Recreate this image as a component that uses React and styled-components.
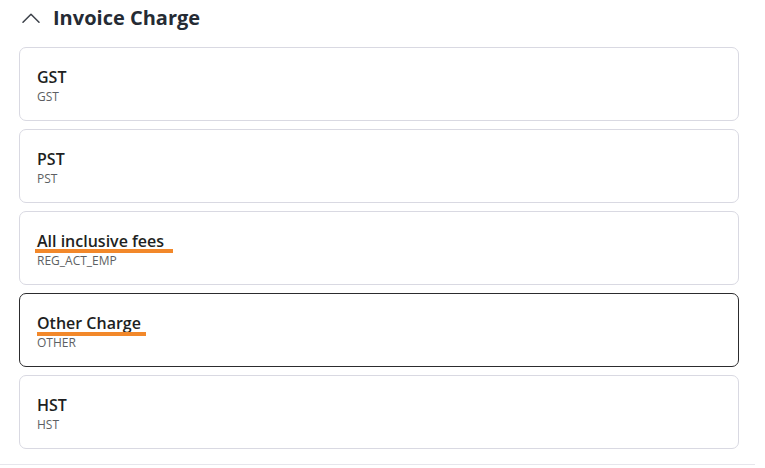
import React from "react";
import styled, { createGlobalStyle } from "styled-components";

const Global = createGlobalStyle`
  html, body { margin: 0; padding: 0; background: #ffffff; }
  body { font-family: "Open Sans", "Noto Sans", sans-serif; }
  * { box-sizing: border-box; }
`;

const Section = styled.section`
  width: 755px;
  padding: 4px 16px 15px 19px;
  border-bottom: 1px solid #e6e6ec;
`;

const Header = styled.div`
  display: flex;
  align-items: center;
  gap: 13px;
  height: 28px;
  padding-left: 3px;
  margin-bottom: 15px;
`;

const Chevron = styled.svg`
  width: 18px;
  height: 10px;
  flex: none;
`;

const Title = styled.h2`
  margin: 0;
  font-size: 20px;
  line-height: 28px;
  font-weight: 700;
  color: #252b34;
`;

const List = styled.div`
  display: flex;
  flex-direction: column;
  gap: 8px;
`;

const Card = styled.div`
  height: 74px;
  border: 1px solid ${(p) => (p.$selected ? "#2c2c2e" : "#d9d9e2")};
  border-radius: 7px;
  padding: 19px 17px 15px;
  background: #ffffff;
`;

const Name = styled.div`
  font-size: 16px;
  line-height: 20px;
  font-weight: 600;
  color: #1e1f22;
`;

const Marked = styled.span`
  position: relative;
  &::after {
    content: "";
    position: absolute;
    left: ${(p) => p.$left}px;
    right: ${(p) => -p.$extend}px;
    bottom: ${(p) => p.$bottom}px;
    height: 4px;
    background: #f2882a;
  }
`;

const Code = styled.div`
  margin-top: 2px;
  font-size: 12px;
  line-height: 16px;
  color: #5d5f63;
`;

const items = [
  { name: "GST", code: "GST" },
  { name: "PST", code: "PST" },
  { name: "All inclusive fees", code: "REG_ACT_EMP", mark: { left: -2, extend: 9, bottom: -1 } },
  { name: "Other Charge", code: "OTHER", selected: true, mark: { left: 0, extend: 5, bottom: -2 } },
  { name: "HST", code: "HST" },
];

export default function App() {
  return (
    <>
      <Global />
      <Section>
        <Header>
          <Chevron viewBox="0 0 18 10" fill="none">
            <polyline points="1,9.2 9,1.2 17,9.2" stroke="#3b4048" strokeWidth="1.5" strokeLinecap="round" strokeLinejoin="round" />
          </Chevron>
          <Title>Invoice Charge</Title>
        </Header>
        <List>
          {items.map((it) => (
            <Card key={it.code} $selected={it.selected}>
              <Name>
                {it.mark ? (
                  <Marked $left={it.mark.left} $extend={it.mark.extend} $bottom={it.mark.bottom}>
                    {it.name}
                  </Marked>
                ) : (
                  it.name
                )}
              </Name>
              <Code>{it.code}</Code>
            </Card>
          ))}
        </List>
      </Section>
    </>
  );
}
